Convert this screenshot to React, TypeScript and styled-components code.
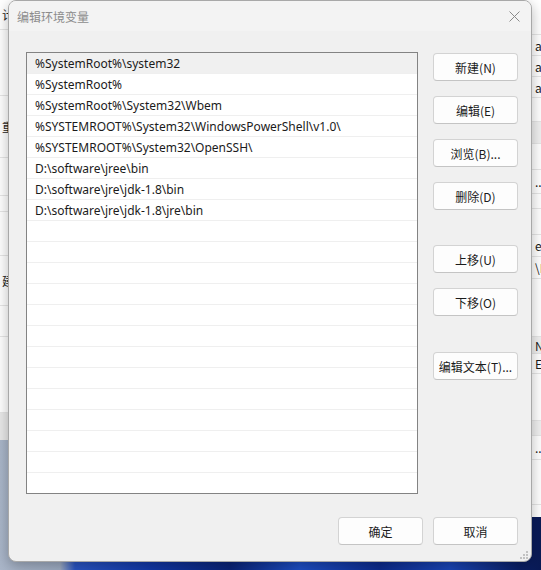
import React from "react";
import styled, { createGlobalStyle } from "styled-components";

const paths = [
  "%SystemRoot%\\system32",
  "%SystemRoot%",
  "%SystemRoot%\\System32\\Wbem",
  "%SYSTEMROOT%\\System32\\WindowsPowerShell\\v1.0\\",
  "%SYSTEMROOT%\\System32\\OpenSSH\\",
  "D:\\software\\jree\\bin",
  "D:\\software\\jre\\jdk-1.8\\bin",
  "D:\\software\\jre\\jdk-1.8\\jre\\bin",
];
const ROW_COUNT = 21;

const sideButtons = [
  { label: "新建(N)", extra: 0 },
  { label: "编辑(E)", extra: 0 },
  { label: "浏览(B)...", extra: 0 },
  { label: "删除(D)", extra: 0 },
  { label: "上移(U)", extra: 20 },
  { label: "下移(O)", extra: 0 },
  { label: "编辑文本(T)...", extra: 21 },
];

// fragments of the windows behind the dialog
const leftRows = [
  { h: 30, text: "计", band: false },
  { h: 66, text: "", band: false },
  { h: 62, text: "重I", band: false },
  { h: 38, text: "", band: false },
  { h: 16, text: "", band: false },
  { h: 44, text: "", band: false },
  { h: 50, text: "建", band: false },
  { h: 31, text: "", band: false },
  { h: 76, text: "", band: false },
];
const rightRows = [
  { h: 35, text: "", band: false },
  { h: 21, text: "al'", band: false },
  { h: 21, text: "al'", band: false },
  { h: 21, text: "al'", band: false },
  { h: 24, text: "", band: false },
  { h: 22, text: "", band: true },
  { h: 26, text: "", band: false },
  { h: 24, text: "...", band: false },
  { h: 15, text: "", band: false },
  { h: 26, text: "", band: false },
  { h: 22, text: "ex", band: false },
  { h: 22, text: "\\I", band: false },
  { h: 58, text: "", band: false },
  { h: 17, text: "N", band: true },
  { h: 20, text: "E", band: false },
  { h: 47, text: "", band: false },
  { h: 15, text: "", band: true },
  { h: 24, text: "...", band: false },
  { h: 45, text: "", band: false },
];

const GlobalStyle = createGlobalStyle`
  html, body {
    margin: 0;
    padding: 0;
    overflow: hidden;
    background: #0c2a86;
  }
  * {
    box-sizing: border-box;
  }
`;

const Desktop = styled.div`
  position: relative;
  width: 541px;
  height: 570px;
  overflow: hidden;
  background: linear-gradient(
    90deg,
    #aab6c9 0px,
    #9fadc4 60px,
    #2a55c4 75px,
    #1238a8 150px,
    #0b2478 230px,
    #1e4fc6 300px,
    #0d2b8e 380px,
    #1a46b8 450px,
    #0a1f66 520px,
    #0a1a55 541px
  );
  font-family: "Noto Sans CJK SC", "Noto Sans", sans-serif;
`;

const BackWindow = styled.div<{ $left: number; $width: number; $height: number }>`
  position: absolute;
  top: 0;
  left: ${(p) => p.$left}px;
  width: ${(p) => p.$width}px;
  height: ${(p) => p.$height}px;
  background: #ffffff;
  display: flex;
  flex-direction: column;
  overflow: hidden;
`;

const BackRow = styled.div<{ $h: number; $band: boolean; $align: "left" | "right" }>`
  height: ${(p) => p.$h}px;
  flex: none;
  display: flex;
  align-items: center;
  justify-content: ${(p) => (p.$align === "right" ? "flex-end" : "flex-start")};
  padding: 0 2px;
  background: ${(p) => (p.$band ? "#f0f0f0" : "transparent")};
  border-bottom: 1px solid #e6e6e6;
  font-size: 12px;
  color: #1a1a1a;
  white-space: nowrap;
`;

const BackFooter = styled.div`
  flex: 1;
  background: #e9e9e9;
`;

const Dialog = styled.div`
  position: absolute;
  left: 8px;
  top: 0;
  width: 524px;
  height: 562px;
  background: #f0f0f0;
  border: 1px solid #a8a8a8;
  border-radius: 8px;
  box-shadow: 0 4px 14px rgba(0, 0, 0, 0.28);
  display: flex;
  flex-direction: column;
  overflow: hidden;
`;

const TitleBar = styled.div`
  height: 30px;
  flex: none;
  display: flex;
  align-items: center;
  justify-content: space-between;
  padding: 0 9px 0 8px;
  background: #f3f3f3;
`;

const Title = styled.span`
  font-size: 12px;
  color: #8c8c8c;
  letter-spacing: 0;
`;

const CloseBox = styled.div`
  width: 16px;
  height: 16px;
  display: flex;
  align-items: center;
  justify-content: center;
`;

const Body = styled.div`
  flex: 1;
  display: flex;
  flex-direction: column;
  padding: 21px 13px 0 17px;
`;

const Main = styled.div`
  display: flex;
  gap: 15px;
`;

const ListBox = styled.div`
  width: 392px;
  height: 442px;
  border: 1px solid #838383;
  background: #ffffff;
  overflow: hidden;
  display: flex;
  flex-direction: column;
`;

const Row = styled.div<{ $selected: boolean }>`
  height: 21px;
  flex: none;
  display: flex;
  align-items: center;
  padding-left: 8px;
  background: ${(p) => (p.$selected ? "#f0f0f0" : "#ffffff")};
  border-bottom: 1px solid #efefef;
  font-family: "Noto Sans", "Open Sans", sans-serif;
  font-size: 12px;
  color: #1b1b1b;
  white-space: nowrap;
`;

const SideColumn = styled.div`
  display: flex;
  flex-direction: column;
  gap: 15px;
  padding-top: 1px;
`;

const Button = styled.button<{ $extra?: number }>`
  width: 85px;
  height: 28px;
  margin: ${(p) => p.$extra ?? 0}px 0 0 0;
  padding: 0;
  border: 1px solid #d3d3d3;
  border-bottom-color: #c4c4c4;
  border-radius: 4px;
  background: #fdfdfd;
  font-family: "Noto Sans CJK SC", "Noto Sans", sans-serif;
  font-size: 12px;
  color: #1b1b1b;
  display: flex;
  align-items: center;
  justify-content: center;
  white-space: nowrap;
`;

const Footer = styled.div`
  display: flex;
  justify-content: flex-end;
  gap: 10px;
  margin-top: 23px;
`;

const Grip = styled.div`
  display: flex;
  justify-content: flex-end;
  padding: 6px 0 0 0;
  margin-right: -10px;
`;

function CloseIcon() {
  return (
    <svg width="11" height="11" viewBox="0 0 11 11">
      <path d="M0.5 0.5 L10.5 10.5 M10.5 0.5 L0.5 10.5" stroke="#8a8a8a" strokeWidth="1" fill="none" />
    </svg>
  );
}

function GripIcon() {
  const dots = [
    [6, 0],
    [3, 3],
    [6, 3],
    [0, 6],
    [3, 6],
    [6, 6],
  ];
  return (
    <svg width="8" height="8" viewBox="0 0 8 8">
      {dots.map(([x, y], i) => (
        <rect key={i} x={x} y={y} width="2" height="2" fill="#c2c2c2" />
      ))}
    </svg>
  );
}

export default function App() {
  const rows = Array.from({ length: ROW_COUNT }, (_, i) => paths[i] ?? "");

  return (
    <>
      <GlobalStyle />
      <Desktop>
        <BackWindow $left={0} $width={30} $height={440}>
          {leftRows.map((r, i) => (
            <BackRow key={i} $h={r.h} $band={r.band} $align="left">
              {r.text}
            </BackRow>
          ))}
          <BackFooter />
        </BackWindow>
        <BackWindow $left={515} $width={60} $height={517}>
          {rightRows.map((r, i) => (
            <BackRow key={i} $h={r.h} $band={r.band} $align="left">
              <span style={{ paddingLeft: 18 }}>{r.text}</span>
            </BackRow>
          ))}
        </BackWindow>

        <Dialog>
          <TitleBar>
            <Title>编辑环境变量</Title>
            <CloseBox>
              <CloseIcon />
            </CloseBox>
          </TitleBar>
          <Body>
            <Main>
              <ListBox>
                {rows.map((text, i) => (
                  <Row key={i} $selected={i === 0}>
                    {text}
                  </Row>
                ))}
              </ListBox>
              <SideColumn>
                {sideButtons.map((b) => (
                  <Button key={b.label} $extra={b.extra}>
                    {b.label}
                  </Button>
                ))}
              </SideColumn>
            </Main>
            <Footer>
              <Button>确定</Button>
              <Button>取消</Button>
            </Footer>
            <Grip>
              <GripIcon />
            </Grip>
          </Body>
        </Dialog>
      </Desktop>
    </>
  );
}
